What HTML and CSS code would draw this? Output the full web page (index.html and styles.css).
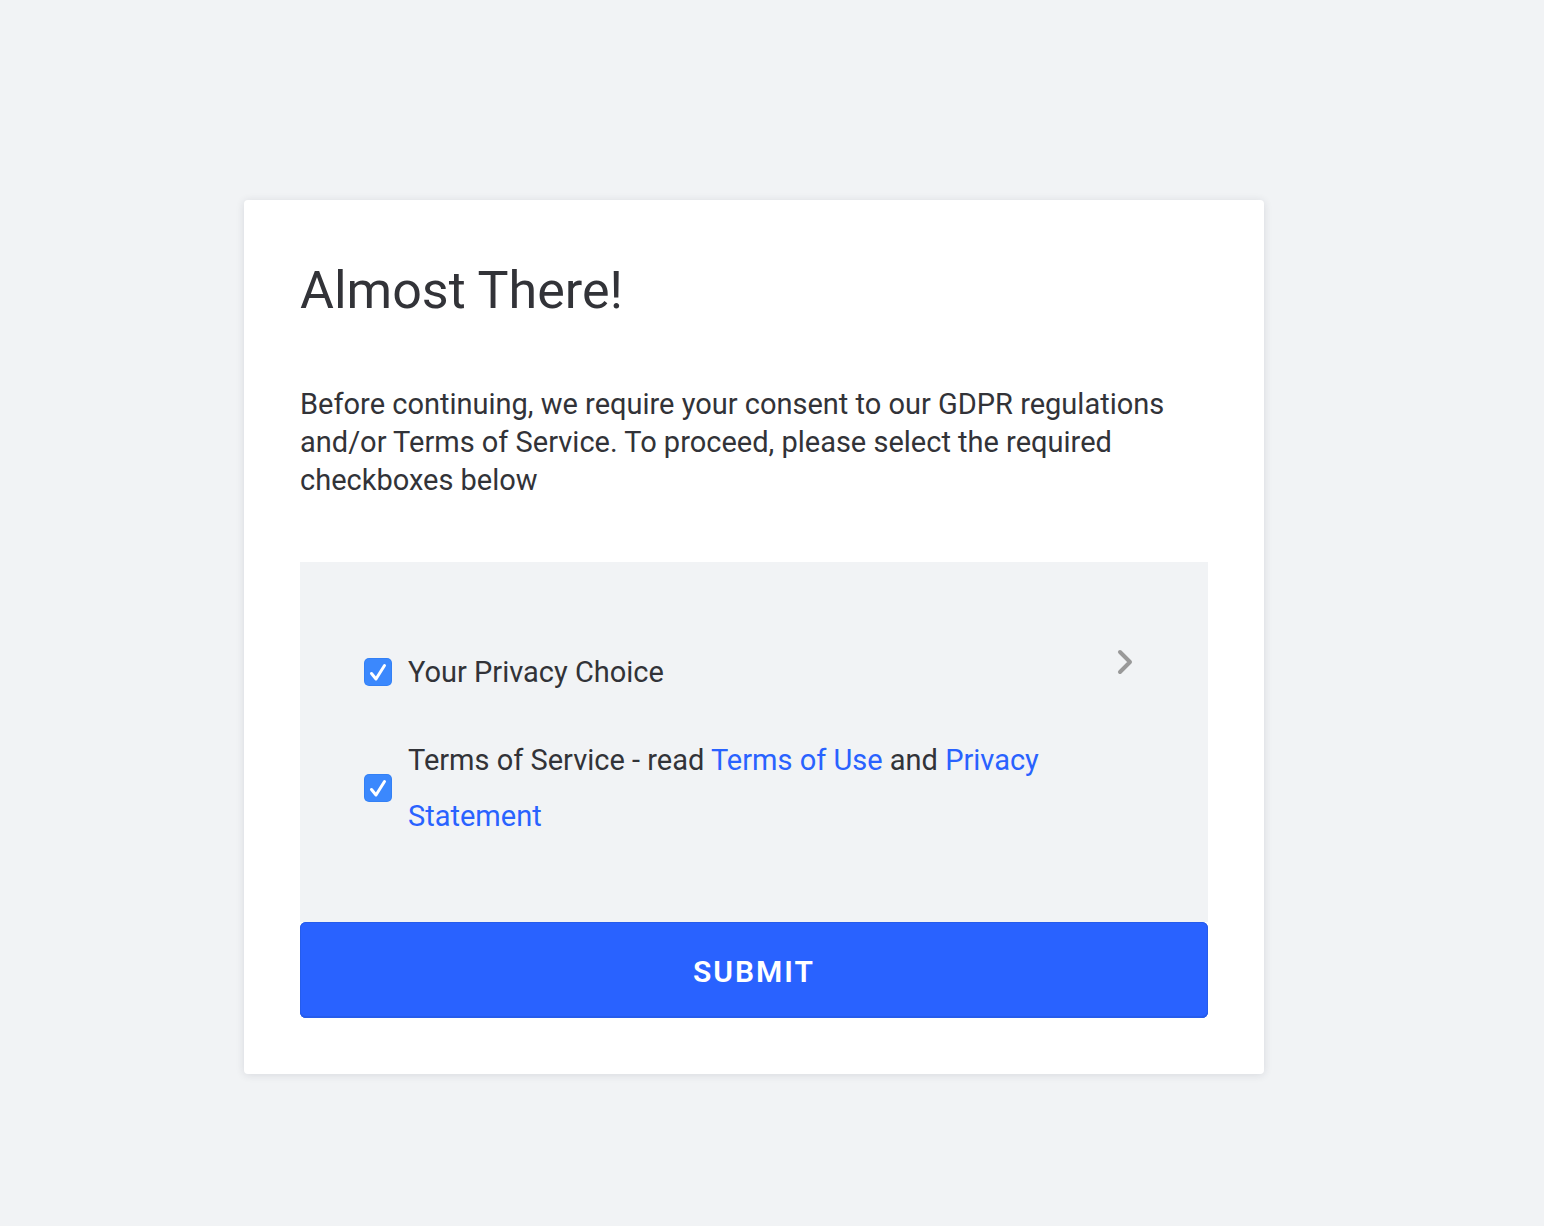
FILE: index.html
```
<!DOCTYPE html>
<html lang="en">
<head>
<meta charset="utf-8">
<meta name="viewport" content="width=device-width, initial-scale=1">
<title>Almost There!</title>
<link rel="stylesheet" href="styles.css">
</head>
<body>
<main class="page">
  <form class="card">
    <h1 class="title">Almost There!</h1>
    <p class="intro">Before continuing, we require your consent to our GDPR regulations and/or Terms of Service. To proceed, please select the required checkboxes below</p>
    <div class="consents">
      <div class="consent">
        <input class="check" type="checkbox" id="privacy" checked>
        <label class="label" for="privacy">Your Privacy Choice</label>
        <button class="more" type="button" aria-label="Show privacy details">
          <svg class="chevron" viewBox="0 0 16 26" aria-hidden="true"><path d="M3 3l10 10L3 23"/></svg>
        </button>
      </div>
      <div class="consent">
        <input class="check" type="checkbox" id="terms" checked>
        <label class="label" for="terms">Terms of Service - read <a class="link" href="#terms-of-use">Terms of Use</a> and <a class="link" href="#privacy-statement">Privacy Statement</a></label>
      </div>
    </div>
    <button class="submit" type="submit">SUBMIT</button>
  </form>
</main>
</body>
</html>
```
FILE: styles.css
```
* {
  box-sizing: border-box;
}

body {
  margin: 0;
  background: #f1f3f5;
  color: #323338;
  font-family: Roboto, "Liberation Sans", sans-serif;
  font-size: 29px;
}

.page {
  padding: 200px 40px 152px 4px;
}

.card {
  max-width: 1020px;
  margin: 0 auto;
  padding: 56px;
  background: #fff;
  border-radius: 4px;
  box-shadow: 0 1px 8px rgba(30, 30, 60, 0.12);
}

.title {
  margin: 0;
  font-size: 52px;
  font-weight: 400;
  line-height: 70px;
}

.intro {
  margin: 59px 0 63px;
  line-height: 38px;
}

.consents {
  display: flex;
  flex-direction: column;
  gap: 32px;
  padding: 82px 64px 78px;
  background: #f1f3f5;
}

.consent {
  display: flex;
  align-items: center;
  gap: 16px;
}

.check {
  appearance: none;
  flex: none;
  width: 28px;
  height: 28px;
  margin: 0;
  border-radius: 5px;
  background: #3b88fd;
  box-shadow: inset 0 0 0 1px #3380f5;
}

.check:checked {
  background-image: url("data:image/svg+xml,%3Csvg xmlns='http://www.w3.org/2000/svg' viewBox='0 0 28 28'%3E%3Cpath d='M7.500 15.500l4.500 5.500L20.500 7.500' fill='none' stroke='white' stroke-width='3' stroke-linecap='round' stroke-linejoin='round'/%3E%3C/svg%3E");
}

.label {
  flex: 1;
  max-width: 660px;
  line-height: 56px;
}

.link {
  color: #2962ff;
  text-decoration: none;
}

.more {
  display: flex;
  align-self: flex-start;
  margin-left: auto;
  padding: 5px 11px;
  border: 0;
  background: none;
}

.chevron {
  width: 16px;
  height: 26px;
  fill: none;
  stroke: #999;
  stroke-width: 4;
  stroke-linecap: round;
  stroke-linejoin: round;
}

.submit {
  display: block;
  width: 100%;
  padding: 30px 28px 26px;
  border: 0;
  border-radius: 6px;
  background: #2962ff;
  box-shadow: inset 0 0 0 1px #265ceb, inset 0 -2px 0 #265ceb;
  color: #fff;
  font: inherit;
  font-size: 30px;
  font-weight: 600;
  line-height: 40px;
  letter-spacing: 2px;
}
```
